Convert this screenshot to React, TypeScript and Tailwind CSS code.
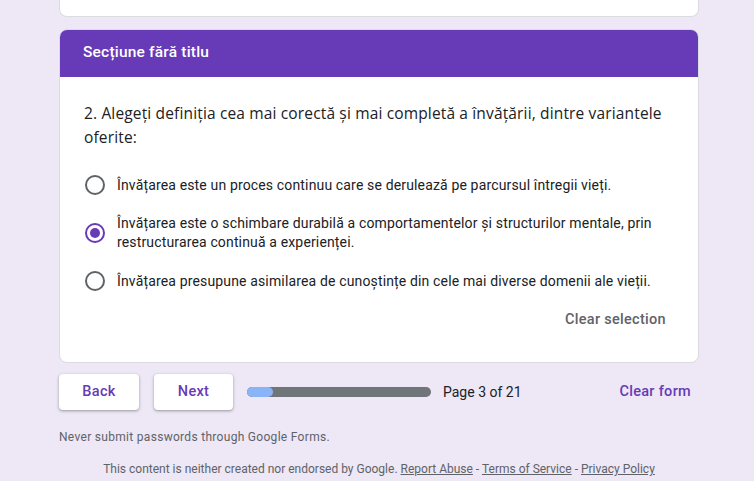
import React from "react";

const gs = { fontFamily: '"Open Sans", Roboto, sans-serif' } as React.CSSProperties;

function Radio({ checked }: { checked?: boolean }) {
  return (
    <div
      className={`w-5 h-5 rounded-full border-2 flex items-center justify-center shrink-0 ${
        checked ? "border-[#673ab7]" : "border-[#5f6368]"
      }`}
    >
      {checked && <div className="w-2.5 h-2.5 rounded-full bg-[#673ab7]" />}
    </div>
  );
}

const shadow = "shadow-[0_1px_2px_rgba(60,64,67,0.3),0_1px_3px_1px_rgba(60,64,67,0.15)]";

export default function App() {
  const options = [
    "Învățarea este un proces continuu care se derulează pe parcursul întregii vieți.",
    "Învățarea este o schimbare durabilă a comportamentelor și structurilor mentale, prin restructurarea continuă a experienței.",
    "Învățarea presupune asimilarea de cunoștințe din cele mai diverse domenii ale vieții.",
  ];
  return (
    <div className="w-[754px] h-[481px] overflow-hidden bg-[#ede7f6] font-['Roboto',sans-serif]">
      <div className="w-[640px] ml-[59px] flex flex-col">
        <div className="h-[17px] bg-white border border-t-0 border-[#dadce0] rounded-b-lg" />
        <div className="mt-3 rounded-lg border border-[#dadce0] bg-white overflow-hidden">
          <div className="h-12 bg-[#673ab7] text-white text-[15.5px] font-medium tracking-[0.2px] flex items-center px-6 -mx-px -mt-px">
            Secțiune fără titlu
          </div>
          <div className="px-6 pt-[24px] pb-[32px]">
            <div className="text-[15.5px] leading-6 text-[#202124] tracking-[0.15px]" style={gs}>
              2. Alegeți definiția cea mai corectă și mai completă a învățării, dintre variantele oferite:
            </div>
            <div className="mt-[12px] flex flex-col">
              {options.map((o, i) => (
                <div key={i} className="flex items-center gap-3 h-12 ml-[1px]">
                  <Radio checked={i === 1} />
                  <div className="text-[14px] leading-[19px] text-[#202124] tracking-[0.15px] pr-[14px]">{o}</div>
                </div>
              ))}
            </div>
            <div className="flex justify-end mt-[5px] pr-[8px]">
              <span className="text-[14.5px] leading-5 font-medium tracking-[0.3px] text-[#5f6368]">Clear selection</span>
            </div>
          </div>
        </div>
        <div className="mt-[11px] flex items-center h-9">
          <button
            className={`w-[80px] h-9 bg-white rounded text-[#673ab7] text-[14.5px] font-medium tracking-[0.3px] ${shadow}`}
          >
            Back
          </button>
          <button
            className={`ml-[15px] w-[79px] h-9 bg-white rounded text-[#673ab7] text-[14.5px] font-medium tracking-[0.3px] ${shadow}`}
          >
            Next
          </button>
          <div className="ml-[14px] w-[184px] h-2.5 rounded-full bg-[#70757a] overflow-hidden">
            <div className="h-full w-[26px] rounded-full bg-[#8ab4f8]" />
          </div>
          <span className="ml-3 text-[14px] text-[#202124]">Page 3 of 21</span>
          <span className="ml-auto mr-[8px] text-[14.5px] font-medium tracking-[0.3px] text-[#673ab7]">Clear form</span>
        </div>
        <div className="mt-[18px] text-[12px] text-[#5f6368] tracking-[0.3px]">Never submit passwords through Google Forms.</div>
        <div className="mt-[14px] text-[12px] text-[#5f6368] text-center">
          This content is neither created nor endorsed by Google.{" "}
          <span className="underline">Report Abuse</span> - <span className="underline">Terms of Service</span> -{" "}
          <span className="underline">Privacy Policy</span>
        </div>
      </div>
    </div>
  );
}
